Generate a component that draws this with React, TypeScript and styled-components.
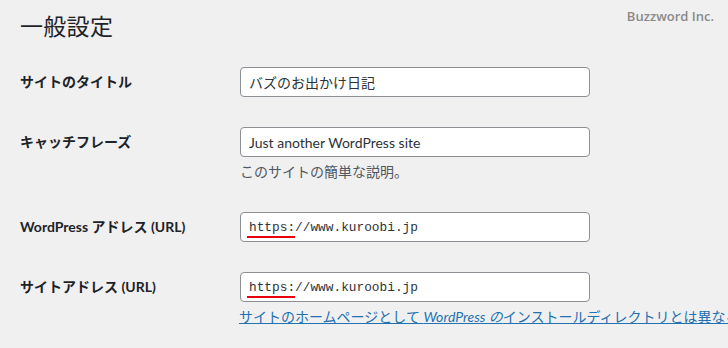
import React from 'react';
import styled, { createGlobalStyle } from 'styled-components';

const GlobalStyle = createGlobalStyle`
  html, body {
    margin: 0;
    padding: 0;
    background: #f0f0f1;
    overflow: hidden;
  }
  body {
    font-family: "Lato", "Noto Sans CJK JP", sans-serif;
    color: #1d2327;
    font-size: 14px;
  }
`;

const Wrap = styled.div`
  width: 728px;
  height: 348px;
  padding: 0 0 0 20px;
  box-sizing: border-box;
  overflow: hidden;
`;

const Header = styled.div`
  display: flex;
  justify-content: space-between;
  align-items: flex-start;
  height: 52px;
`;

const Title = styled.h1`
  margin: 0;
  padding-top: 12px;
  font-size: 23px;
  font-weight: 400;
  line-height: 29px;
  letter-spacing: 0.3px;
`;

const Watermark = styled.div`
  padding: 7px 14px 0 0;
  font-family: "Open Sans", "Noto Sans", sans-serif;
  font-weight: 600;
  font-size: 13px;
  color: #8a8a8a;
`;

const FormTable = styled.div`
  display: grid;
  grid-template-columns: 220px 1fr;
`;

const Label = styled.div`
  padding: 20px 10px 0 0;
  font-weight: 700;
  font-size: 14px;
  line-height: 20px;
  white-space: nowrap;
`;

const Field = styled.div`
  padding: 15px 0 15px 0;
  min-width: 0;
`;

const InputBox = styled.div<{ $mono?: boolean }>`
  position: relative;
  width: 350px;
  height: 30px;
  box-sizing: border-box;
  border: 1px solid #8c8f94;
  border-radius: 4px;
  background: #fff;
  padding: 0 8px;
  display: flex;
  align-items: center;
  font-family: ${p => (p.$mono ? '"Liberation Mono", "DejaVu Sans Mono", monospace' : '"Lato", "Noto Sans CJK JP", sans-serif')};
  font-size: ${p => (p.$mono ? '12.8px' : '14px')};
  color: #2c3338;
  white-space: nowrap;
`;

const RedMark = styled.span`
  position: absolute;
  left: 6px;
  top: 23px;
  width: 48px;
  height: 2px;
  background: #e8000b;
`;

const Description = styled.p`
  margin: 4px 0 0 0;
  font-size: 14px;
  line-height: 21px;
  color: #50575e;
`;

const HelpLink = styled.a`
  display: block;
  margin: 4px 0 0 -1px;
  font-size: 14px;
  line-height: 21px;
  color: #2271b1;
  text-decoration: underline;
  white-space: nowrap;
  em { font-style: italic; }
`;

export default function App() {
  return (
    <>
      <GlobalStyle />
      <Wrap>
        <Header>
          <Title>一般設定</Title>
          <Watermark>Buzzword Inc.</Watermark>
        </Header>
        <FormTable>
          <Label>サイトのタイトル</Label>
          <Field>
            <InputBox>バズのお出かけ日記</InputBox>
          </Field>

          <Label>キャッチフレーズ</Label>
          <Field>
            <InputBox>Just another WordPress site</InputBox>
            <Description>このサイトの簡単な説明。</Description>
          </Field>

          <Label>WordPress アドレス (URL)</Label>
          <Field>
            <InputBox $mono>
              https://www.kuroobi.jp
              <RedMark />
            </InputBox>
          </Field>

          <Label>サイトアドレス (URL)</Label>
          <Field>
            <InputBox $mono>
              https://www.kuroobi.jp
              <RedMark />
            </InputBox>
            <HelpLink href="#">
              サイトのホームページとして <em>WordPress の</em>インストールディレクトリとは異なる場所を設定する場合は、ここにアドレスを入力してください。
            </HelpLink>
          </Field>
        </FormTable>
      </Wrap>
    </>
  );
}
